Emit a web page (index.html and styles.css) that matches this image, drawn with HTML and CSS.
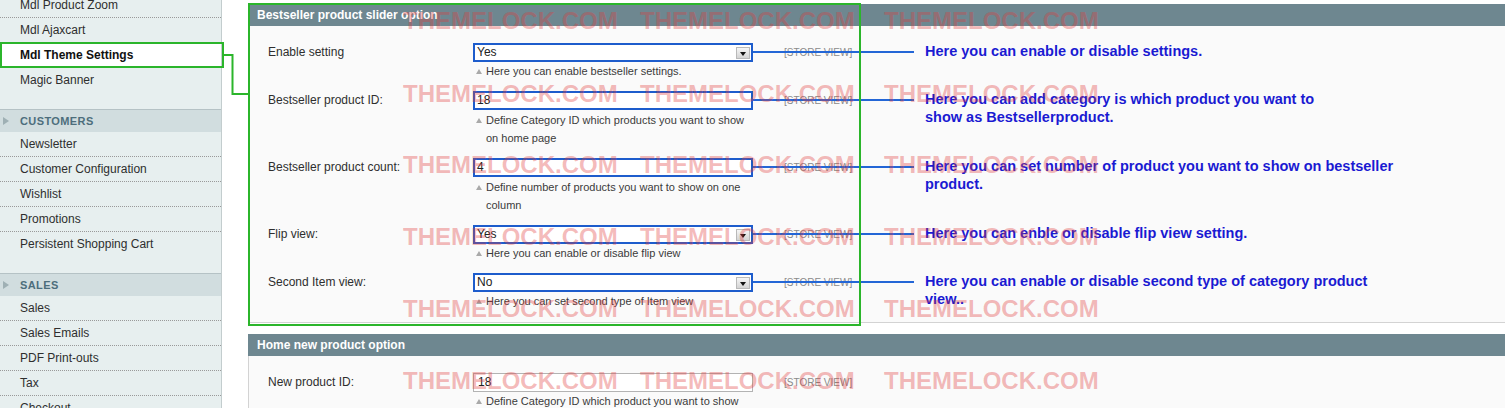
FILE: index.html
```html
<!DOCTYPE html>
<html>
<head>
<meta charset="utf-8">
<title>Mdl Theme Settings</title>
<link rel="stylesheet" href="styles.css">
</head>
<body>
<div class="page">
  <aside class="sidebar">
    <ul class="nav-list">
      <li>Mdl Product Zoom</li>
      <li>Mdl Ajaxcart</li>
      <li class="active">Mdl Theme Settings</li>
      <li>Magic Banner</li>
    </ul>
    <div class="nav-head">CUSTOMERS</div>
    <ul class="nav-list">
      <li>Newsletter</li>
      <li>Customer Configuration</li>
      <li>Wishlist</li>
      <li>Promotions</li>
      <li>Persistent Shopping Cart</li>
    </ul>
    <div class="nav-head">SALES</div>
    <ul class="nav-list">
      <li>Sales</li>
      <li>Sales Emails</li>
      <li>PDF Print-outs</li>
      <li>Tax</li>
      <li>Checkout</li>
      <li>Shipping Settings</li>
    </ul>
  </aside>

  <main class="main">
    <section class="fieldset">
      <div class="fs-head">Bestseller product slider option</div>
      <div class="fs-body">
        <div class="row">
          <div class="label">Enable setting</div>
          <div class="field">
            <div class="input marked select">Yes<span class="arrow"></span></div>
            <div class="hint">Here you can enable bestseller settings.</div>
          </div>
          <div class="scope">[Store View]<span class="link"></span></div>
          <div class="note">Here you can enable or disable settings.</div>
        </div>
        <div class="row">
          <div class="label">Bestseller product ID:</div>
          <div class="field">
            <div class="input marked">18</div>
            <div class="hint two">Define Category ID which products you want to show<br>on home page</div>
          </div>
          <div class="scope">[Store View]<span class="link"></span></div>
          <div class="note">Here you can add category is which product you want to<br>show as Bestsellerproduct.</div>
        </div>
        <div class="row">
          <div class="label">Bestseller product count:</div>
          <div class="field">
            <div class="input marked">4</div>
            <div class="hint two">Define number of products you want to show on one<br>column</div>
          </div>
          <div class="scope">[Store View]<span class="link"></span></div>
          <div class="note">Here you can set number of product you want to show on bestseller<br>product.</div>
        </div>
        <div class="row">
          <div class="label">Flip view:</div>
          <div class="field">
            <div class="input marked select">Yes<span class="arrow"></span></div>
            <div class="hint">Here you can enable or disable flip view</div>
          </div>
          <div class="scope">[Store View]<span class="link"></span></div>
          <div class="note">Here you can enble or disable flip view setting.</div>
        </div>
        <div class="row">
          <div class="label">Second Item view:</div>
          <div class="field">
            <div class="input marked select">No<span class="arrow"></span></div>
            <div class="hint">Here you can set second type of Item view</div>
          </div>
          <div class="scope">[Store View]<span class="link"></span></div>
          <div class="note">Here you can enable or disable second type of category product<br>view..</div>
        </div>
      </div>
    </section>

    <section class="fieldset">
      <div class="fs-head">Home new product option</div>
      <div class="fs-body second">
        <div class="row">
          <div class="label">New product ID:</div>
          <div class="field">
            <div class="input">18</div>
            <div class="hint">Define Category ID which product you want to show</div>
          </div>
          <div class="scope">[Store View]</div>
        </div>
      </div>
    </section>
  </main>
</div>

<div class="mark-side"></div>
<svg class="connector" width="30" height="50" viewBox="0 0 30 50">
  <polyline points="2,5 12.5,5 12.5,44 30,44" fill="none" stroke="#2bb52b" stroke-width="2"/>
</svg>
<div class="mark-main"></div>

<div class="watermarks">
  <span>THEMELOCK.COM</span><span>THEMELOCK.COM</span><span>THEMELOCK.COM</span>
  <span>THEMELOCK.COM</span><span>THEMELOCK.COM</span><span>THEMELOCK.COM</span>
  <span>THEMELOCK.COM</span><span>THEMELOCK.COM</span><span>THEMELOCK.COM</span>
  <span>THEMELOCK.COM</span><span>THEMELOCK.COM</span><span>THEMELOCK.COM</span>
  <span>THEMELOCK.COM</span><span>THEMELOCK.COM</span><span>THEMELOCK.COM</span>
  <span>THEMELOCK.COM</span><span>THEMELOCK.COM</span><span>THEMELOCK.COM</span>
</div>
</body>
</html>
```

FILE: styles.css
```css
* { box-sizing: border-box; }
html, body { margin: 0; padding: 0; }
body {
  width: 1505px;
  height: 408px;
  overflow: hidden;
  position: relative;
  background: #fff;
  font-family: "Liberation Sans", Arial, sans-serif;
  font-size: 12px;
  color: #2e2e2e;
}
.page { display: flex; align-items: flex-start; }

/* Sidebar */
.sidebar {
  flex: 0 0 222px;
  width: 222px;
  margin-top: -7px;
  background: #e7efef;
  border-right: 1px solid #c3cdce;
  padding-bottom: 40px;
}
.nav-list { list-style: none; margin: 0; padding: 0 0 17px; }
.nav-list li {
  height: 25px;
  line-height: 24px;
  padding-left: 20px;
  border-bottom: 1px dotted #9a9a9a;
  white-space: nowrap;
}
.nav-list li:last-child { border-bottom: 0; height: 24px; }
.nav-list li.active { background: #fff; font-weight: bold; color: #111; }
.nav-head {
  position: relative;
  height: 23px;
  line-height: 22px;
  border-top: 1px solid #b5c2c5;
  background: #d1dddf;
  padding-left: 20px;
  font-weight: bold;
  font-size: 11px;
  letter-spacing: 0.4px;
  color: #4d6e7c;
}
.nav-head::before {
  content: "";
  position: absolute;
  left: 3px;
  top: 7px;
  border-left: 6px solid #9fb0b4;
  border-top: 4px solid transparent;
  border-bottom: 4px solid transparent;
}

/* Main */
.main { flex: 1; min-width: 0; padding: 4px 0 0 26px; }
.fieldset { margin-bottom: 11px; margin-right: -4px; }
.fs-head {
  height: 22px;
  line-height: 22px;
  background: #6e8790;
  color: #fff;
  font-weight: bold;
  padding-left: 9px;
}
.fs-body {
  background: #fafafa;
  border: 1px solid #d3d3d3;
  border-top: 0;
  padding: 17px 0 1px;
}
.fs-body.second { padding-top: 17px; }
.row { display: flex; align-items: flex-start; margin-bottom: 11px; }
.label { width: 224px; padding-left: 19px; line-height: 19px; white-space: nowrap; }
.field { width: 280px; }
.input {
  position: relative;
  height: 19px;
  border: 1px solid #b3b3b3;
  background: #fff;
  padding-left: 4px;
  line-height: 17px;
  color: #222;
}
.input.marked { border: 2px solid #1d5ccc; line-height: 15px; padding-left: 2px; }
.arrow {
  position: absolute;
  right: 1px;
  top: 2px;
  width: 14px;
  height: 12px;
  border: 1px solid #b9b9b9;
  background: linear-gradient(#f6f6f6, #d3d3d3);
}
.arrow::after {
  content: "";
  position: absolute;
  left: 3px;
  top: 4px;
  border-top: 4px solid #111;
  border-left: 3.5px solid transparent;
  border-right: 3.5px solid transparent;
}
.hint {
  position: relative;
  padding-left: 13px;
  font-size: 11px;
  line-height: 18px;
  color: #3a3a3a;
  white-space: nowrap;
}
.hint.two { margin-top: 1px; }
.hint::before {
  content: "";
  position: absolute;
  left: 3px;
  top: 7px;
  border-bottom: 5px solid #a9a9a9;
  border-left: 3px solid transparent;
  border-right: 3px solid transparent;
}
.scope {
  position: relative;
  width: 172px;
  padding-left: 31px;
  font-size: 10px;
  line-height: 19px;
  color: #8a8a8a;
  text-transform: uppercase;
  white-space: nowrap;
}
.link {
  position: absolute;
  left: 0;
  top: 8px;
  width: 161px;
  height: 2px;
  background: #2366d6;
}
.note {
  margin-top: -1px;
  color: #1a1ad2;
  font-weight: bold;
  font-size: 14.5px;
  line-height: 18px;
  white-space: nowrap;
}

/* Annotation overlays */
.mark-side {
  position: absolute;
  left: 0;
  top: 42px;
  width: 224px;
  height: 26px;
  border: 2px solid #2bb52b;
}
.connector { position: absolute; left: 220px; top: 50px; }
.mark-main {
  position: absolute;
  left: 248px;
  top: 3px;
  width: 613px;
  height: 323px;
  border: 2px solid #2bb52b;
}

/* Watermarks */
.watermarks {
  position: absolute;
  left: 403px;
  top: 9px;
  display: grid;
  grid-template-columns: 237px 244px 222px;
  grid-template-rows: 73px 71px 72px 72px 72px 24px;
  pointer-events: none;
}
.watermarks span {
  font-size: 24px;
  line-height: 24px;
  font-weight: bold;
  color: rgba(225, 60, 60, 0.36);
  white-space: nowrap;
}
```
